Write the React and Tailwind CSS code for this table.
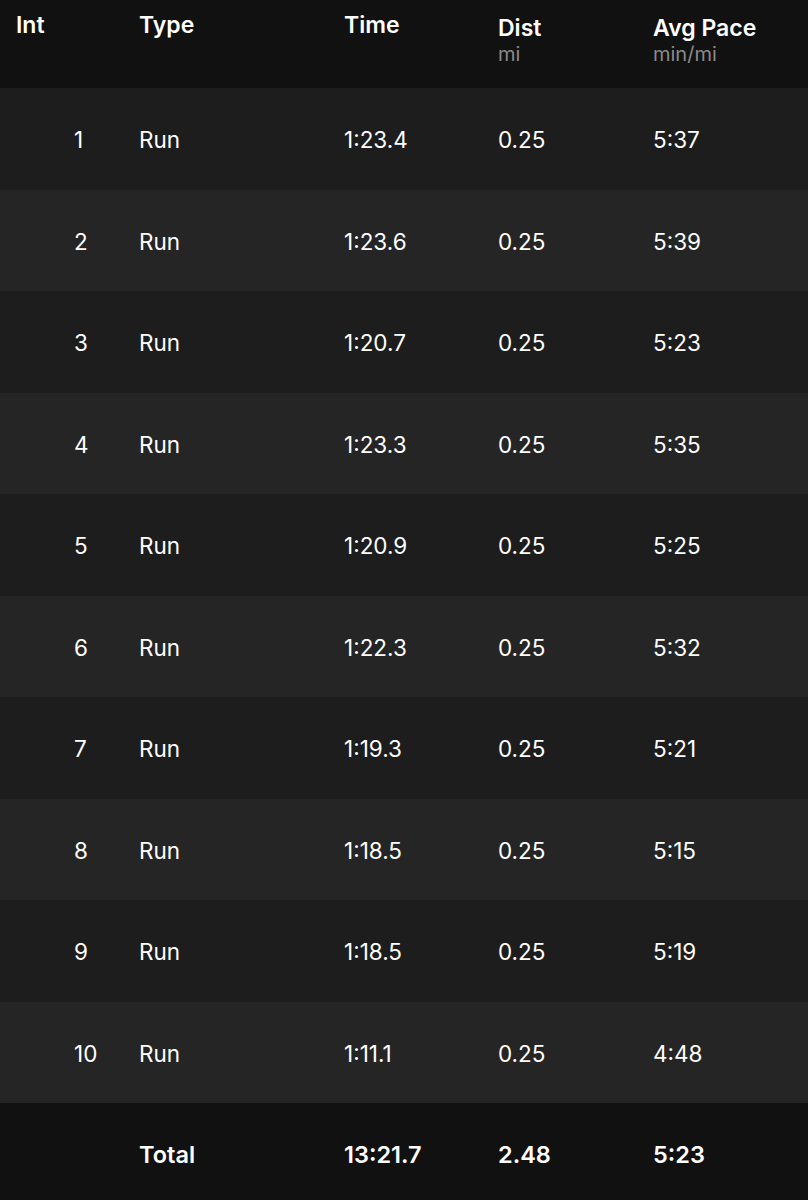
import React from "react";

const rows = [
  ["1", "1:23.4", "5:37"],
  ["2", "1:23.6", "5:39"],
  ["3", "1:20.7", "5:23"],
  ["4", "1:23.3", "5:35"],
  ["5", "1:20.9", "5:25"],
  ["6", "1:22.3", "5:32"],
  ["7", "1:19.3", "5:21"],
  ["8", "1:18.5", "5:15"],
  ["9", "1:18.5", "5:19"],
  ["10", "1:11.1", "4:48"],
];

const grid = "grid grid-cols-[139px_205px_154px_155px_1fr]";

export default function App() {
  return (
    <div className="w-[808px] h-[1200px] bg-[#111111] text-white overflow-hidden" style={{ fontFamily: "Inter, 'Noto Sans', sans-serif" }}>
      <div className={`${grid} h-[88px] bg-[#111111] pt-[11px]`}>
        <div className="pl-4 text-[23px] font-semibold leading-[28px]">Int</div>
        <div className="text-[23px] font-semibold leading-[28px]">Type</div>
        <div className="text-[23px] font-semibold leading-[28px]">Time</div>
        <div className="pt-[3px]">
          <div className="text-[23px] font-semibold leading-[28px]">Dist</div>
          <div className="text-[20px] leading-[24px] text-[#8a8a8a]">mi</div>
        </div>
        <div className="pt-[3px]">
          <div className="text-[23px] font-semibold leading-[28px]">Avg Pace</div>
          <div className="text-[20px] leading-[24px] text-[#8a8a8a]">min/mi</div>
        </div>
      </div>
      {rows.map((r, i) => (
        <div
          key={r[0]}
          className={`${grid} h-[101.5px] items-center pt-[3px] text-[22.5px] ${i % 2 === 0 ? "bg-[#1d1d1d]" : "bg-[#252525]"}`}
        >
          <div className="pl-[74px]">{r[0]}</div>
          <div>Run</div>
          <div>{r[1]}</div>
          <div>0.25</div>
          <div>{r[2]}</div>
        </div>
      ))}
      <div className={`${grid} h-[97px] items-center pt-[6px] text-[23.5px] font-semibold bg-[#111111]`}>
        <div></div>
        <div>Total</div>
        <div>13:21.7</div>
        <div>2.48</div>
        <div>5:23</div>
      </div>
    </div>
  );
}
